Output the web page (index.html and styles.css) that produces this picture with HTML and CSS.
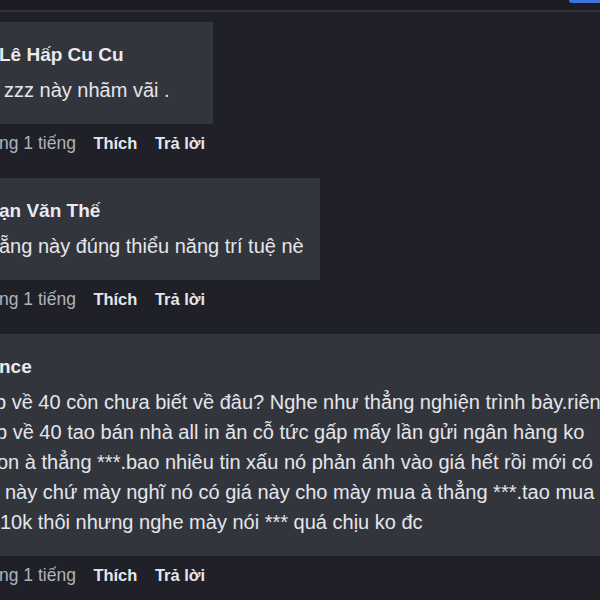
FILE: index.html
```html
<!DOCTYPE html>
<html lang="vi">
<head>
<meta charset="utf-8">
<title>Bình luận</title>
<link rel="stylesheet" href="styles.css">
</head>
<body>
<div class="page">
  <div class="topbar">
    <div class="topbar-btn"></div>
  </div>
  <div class="feed">
    <div class="comment">
      <div class="bubble bubble-1">
        <div class="name name-1">Lê Hấp Cu Cu</div>
        <div class="line line-1a">zzz này nhãm vãi .</div>
      </div>
      <div class="meta">
        <span class="time">ng 1 tiếng</span>
        <span class="action">Thích</span>
        <span class="action">Trả lời</span>
      </div>
    </div>
    <div class="comment">
      <div class="bubble bubble-2">
        <div class="name name-2">ạn Văn Thế</div>
        <div class="line line-2a">ẵng này đúng thiểu năng trí tuệ nè</div>
      </div>
      <div class="meta">
        <span class="time">ng 1 tiếng</span>
        <span class="action">Thích</span>
        <span class="action">Trả lời</span>
      </div>
    </div>
    <div class="comment">
      <div class="bubble bubble-3">
        <div class="name name-3">nce</div>
        <div class="line line-3a">b về 40 còn chưa biết về đâu? Nghe như thẳng nghiện trình bày.riêng</div>
        <div class="line line-3b">b về 40 tao bán nhà all in ăn cỗ tức gấp mấy lần gửi ngân hàng ko</div>
        <div class="line line-3c">on à thẳng ***.bao nhiêu tin xấu nó phản ánh vào giá hết rồi mới có</div>
        <div class="line line-3d">này chứ mày nghĩ nó có giá này cho mày mua à thẳng ***.tao mua</div>
        <div class="line line-3e">10k thôi nhưng nghe mày nói *** quá chịu ko đc</div>
      </div>
      <div class="meta">
        <span class="time">ng 1 tiếng</span>
        <span class="action">Thích</span>
        <span class="action">Trả lời</span>
      </div>
    </div>
  </div>
</div>
</body>
</html>
```

FILE: styles.css
```css
* { box-sizing: border-box; }

html, body {
  margin: 0;
  padding: 0;
  background: #1f2028;
}

.page {
  width: 600px;
  height: 600px;
  overflow: hidden;
  background: #1f2028;
  font-family: "Liberation Sans", Arial, sans-serif;
  color: #e4e6eb;
}

.topbar {
  height: 12px;
  background: #1c1d24;
  border-bottom: 2px solid #33353b;
  display: flex;
  justify-content: flex-end;
  align-items: flex-start;
}

.topbar-btn {
  width: 31px;
  height: 3px;
  background: #3f74dc;
  border-bottom-left-radius: 3px;
}

.feed {
  display: flex;
  flex-direction: column;
  padding-top: 10px;
}

.comment {
  display: flex;
  flex-direction: column;
  align-items: flex-start;
  margin-bottom: 23px;
}

.bubble {
  background: #33353d;
  padding: 20px 0 19px 0;
  white-space: nowrap;
}

.bubble-1 { width: 213px; }
.bubble-2 { width: 320px; }
.bubble-3 { width: 640px; }

.name {
  font-weight: bold;
  font-size: 19px;
  line-height: 26px;
  margin-bottom: 7px;
  color: #e9eaee;
}

.name-1 { margin-left: -1px; }
.name-2 { margin-left: -1px; }
.name-3 { margin-left: -1px; }

.line {
  font-size: 20px;
  line-height: 30px;
  color: #e4e6eb;
}

.line-1a { margin-left: 4px; }
.line-2a { margin-left: -1px; }
.line-3a { margin-left: -5px; }
.line-3b { margin-left: -4px; }
.line-3c { margin-left: -3px; }
.line-3d { margin-left: 5px; }
.line-3e { margin-left: 0; }

.meta {
  margin-top: 7px;
  display: flex;
  gap: 17.5px;
  font-size: 16.5px;
  line-height: 24px;
}

.time {
  color: #b0b3b8;
  font-size: 17.5px;
  margin-left: -1px;
}

.action {
  font-weight: bold;
  color: #e4e6eb;
}
```
